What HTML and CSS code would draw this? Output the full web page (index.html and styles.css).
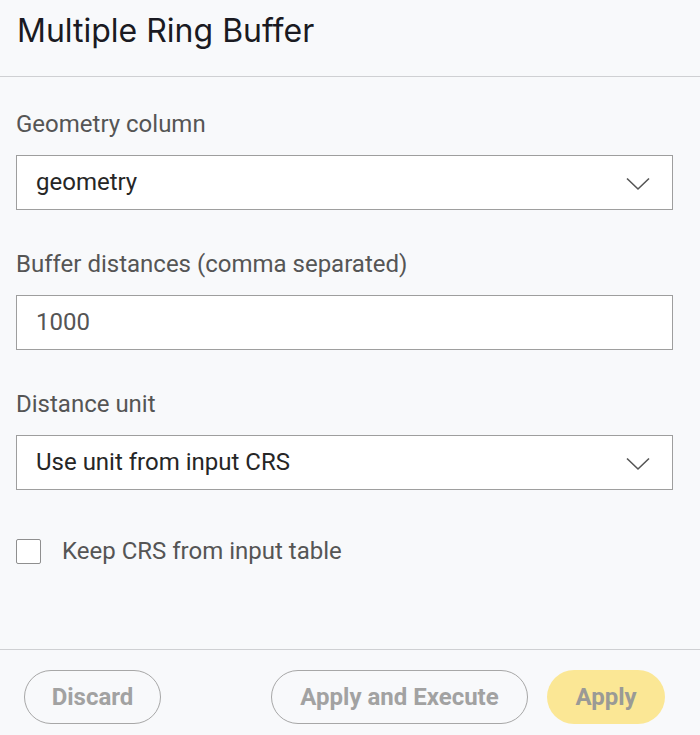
FILE: index.html
```html
<!DOCTYPE html>
<html>
<head>
<meta charset="utf-8">
<link rel="stylesheet" href="styles.css">
</head>
<body>
<div class="panel">
  <header class="header"><h1 class="title">Multiple Ring Buffer</h1></header>
  <main class="content">
    <div class="field">
      <label class="label">Geometry column</label>
      <div class="select"><span class="value">geometry</span>
        <svg class="chev" width="24" height="14" viewBox="0 0 24 14"><path d="M1 1.5 L12 12 L23 1.5" fill="none" stroke="#555" stroke-width="1.6"/></svg>
      </div>
    </div>
    <div class="field">
      <label class="label">Buffer distances (comma separated)</label>
      <div class="input"><span class="value light">1000</span></div>
    </div>
    <div class="field">
      <label class="label">Distance unit</label>
      <div class="select"><span class="value">Use unit from input CRS</span>
        <svg class="chev" width="24" height="14" viewBox="0 0 24 14"><path d="M1 1.5 L12 12 L23 1.5" fill="none" stroke="#555" stroke-width="1.6"/></svg>
      </div>
    </div>
    <div class="check-row">
      <span class="checkbox"></span>
      <span class="check-label">Keep CRS from input table</span>
    </div>
  </main>
  <footer class="footer">
    <button class="btn outline discard">Discard</button>
    <div class="right">
      <button class="btn outline exec">Apply and Execute</button>
      <button class="btn yellow apply">Apply</button>
    </div>
  </footer>
</div>
</body>
</html>
```
FILE: styles.css
```css
* { box-sizing: border-box; }
html, body { margin: 0; padding: 0; background: #f8f9fb; }
body { width: 700px; height: 735px; font-family: Roboto, "Noto Sans", sans-serif; }
.panel { display: flex; flex-direction: column; height: 735px; }
.header { height: 77px; border-bottom: 1px solid #cfd0d3; display: flex; align-items: center; padding: 0 17px 16px; }
.title { margin: 0; font-family: Inter, "Noto Sans", sans-serif; font-weight: 400; font-size: 32px; color: #1a1a22; }
.content { flex: 1; padding: 33px 27px 0 16px; }
.field { display: flex; flex-direction: column; }
.field + .field { margin-top: 40px; }
.label { font-size: 24px; color: #555; line-height: 28px; margin-bottom: 17px; }
.select, .input { height: 55px; background: #fff; border: 1px solid #9e9e9e; display: flex; align-items: center; padding: 0 22px 2px 19px; }
.value { font-size: 24px; color: #262626; flex: 1; }
.value.light { color: #555; }
.chev { margin-top: 4px; }
.check-row { display: flex; align-items: center; margin-top: 47px; }
.checkbox { width: 25px; height: 25px; border: 1.5px solid #8f8f8f; background: #fff; border-radius: 2px; }
.check-label { margin-left: 21px; font-size: 24px; color: #555; }
.footer { height: 86px; border-top: 1px solid #cfd0d3; display: flex; align-items: flex-start; justify-content: space-between; padding: 20px 35px 0 24px; }
.right { display: flex; gap: 19px; }
.btn { height: 54px; border-radius: 27px; font-family: Roboto, sans-serif; font-weight: 700; font-size: 24px; color: #a2a2a2; background: transparent; padding: 0; }
.outline { border: 1.5px solid #a7a7a7; }
.discard { width: 137px; }
.exec { width: 257px; }
.yellow { background: #fbe795; border: none; width: 118px; color: #9a9a96; }
```
